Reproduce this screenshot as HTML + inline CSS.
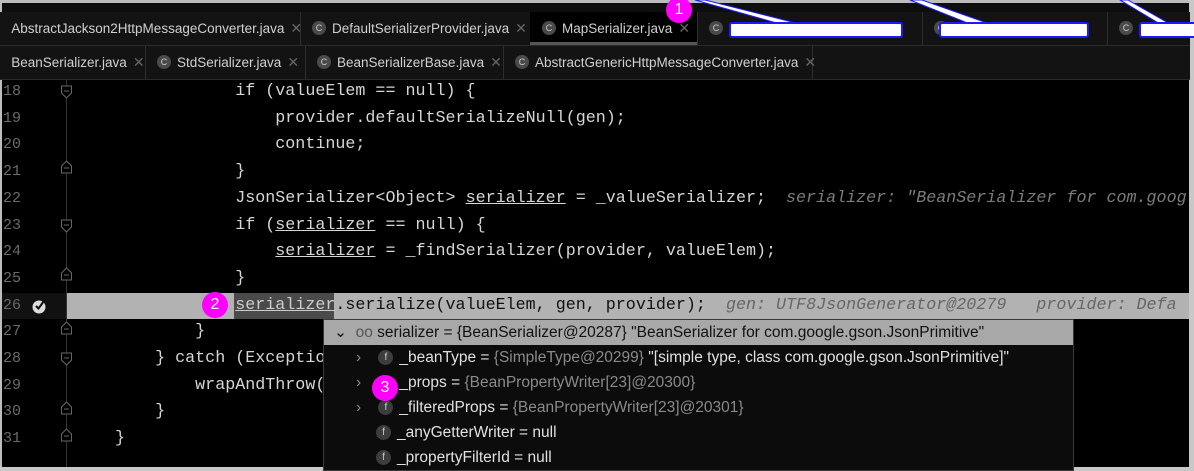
<!DOCTYPE html>
<html><head><style>
body{margin:0;width:1194px;height:471px;overflow:hidden;background:#000;position:relative;font-family:"Liberation Sans",sans-serif}
.abs{position:absolute}
.tabrow{position:absolute;left:0;width:1190px;height:33px;background:#131313;border-bottom:1px solid #2a2a2a}
.tab{position:absolute;top:0;height:33px;border-right:1px solid #2e2e2e;color:#d0d0d0;font-size:13.5px;line-height:33px;white-space:nowrap}
.ic{display:inline-block;width:14px;height:14px;border-radius:50%;background:#4a4a4a;color:#ccc;font-size:9px;line-height:14px;text-align:center;vertical-align:middle;margin:0 6px 2px 12px}
.x{color:#666;margin-left:6px;font-size:14px}
.code{position:absolute;left:75px;font-family:"Liberation Mono",monospace;font-size:16.7px;color:#d6d6d6;white-space:pre;line-height:26.7px}
.ln{position:absolute;left:3px;font-family:"Liberation Mono",monospace;font-size:15px;color:#6a6a6a;line-height:26.7px}
.u{text-decoration:underline}
.h{color:#7c7c7c;font-style:italic}
.pop{position:absolute;left:323px;top:319px;width:749px;height:150px;background:#0c0c0c;border:1px solid #3a3a3a;font-size:15.5px;color:#e0e0e0}
.pr{position:absolute;left:0;height:25px;line-height:25px;white-space:nowrap}
.f{display:inline-block;width:15px;height:15px;border-radius:50%;background:#3d3d3d;color:#ccc;font-size:10px;line-height:15px;text-align:center;margin-right:6px;vertical-align:middle}
.g{color:#8a8a8a}
.b{position:absolute;width:26px;height:26px;border-radius:50%;background:#f0f;color:#fff;font-size:16px;line-height:26px;text-align:center}
.wb{position:absolute;background:#fff;border:2px solid #1a1aff;border-radius:3px;height:12px}
</style></head><body>
<div class="abs" style="left:0;top:0;width:1194px;height:3px;background:#bdbdbd"></div>
<div class="abs" style="left:0;top:0;width:2px;height:471px;background:#bdbdbd"></div>
<div class="abs" style="left:1189px;top:0;width:5px;height:471px;background:#c8c8c8"></div>
<div class="abs" style="left:0;top:467px;width:1194px;height:4px;background:#c8c8c8"></div>
<div class="abs" style="left:2px;top:3px;width:1187px;height:9px;background:#0e0e0e"></div>

<div class="tabrow" style="top:12px">
<div class="tab" style="left:0;width:300px">&nbsp;&nbsp;&nbsp;AbstractJackson2HttpMessageConverter.java<span class="x">✕</span></div>
<div class="tab" style="left:300px;width:230px"><span class="ic">C</span>DefaultSerializerProvider.java<span class="x">✕</span></div>
<div class="tab" style="left:530px;width:167px;background:#000;box-shadow:inset 0 -3px 0 #555"><span class="ic">C</span>MapSerializer.java<span class="x">✕</span></div>
<div class="tab" style="left:697px;width:225px"><span class="ic">C</span></div>
<div class="tab" style="left:922px;width:185px"><span class="ic">C</span></div>
<div class="tab" style="left:1107px;width:90px;border:none"><span class="ic">C</span></div>
</div>
<div class="tabrow" style="top:46px">
<div class="tab" style="left:0;width:145px">&nbsp;&nbsp;&nbsp;BeanSerializer.java<span class="x">✕</span></div>
<div class="tab" style="left:145px;width:160px"><span class="ic">C</span>StdSerializer.java<span class="x">✕</span></div>
<div class="tab" style="left:305px;width:198px"><span class="ic">C</span>BeanSerializerBase.java<span class="x">✕</span></div>
<div class="tab" style="left:503px;width:309px"><span class="ic">C</span>AbstractGenericHttpMessageConverter.java<span class="x">✕</span></div>
</div>

<svg class="abs" style="left:0;top:0" width="1194" height="40">
<polygon points="695,0 705,0 800,24 780,24" fill="#fff" stroke="#1a1aff" stroke-width="1"/>
<polygon points="910,0 922,0 990,24 970,24" fill="#fff" stroke="#1a1aff" stroke-width="1"/>
<polygon points="1120,0 1128,0 1170,24 1160,24" fill="#fff" stroke="#1a1aff" stroke-width="1"/>
</svg>
<div class="wb" style="left:729px;top:22px;width:170px"></div>
<div class="wb" style="left:939px;top:22px;width:146px"></div>
<div class="wb" style="left:1139px;top:22px;width:60px"></div>

<div class="abs" style="left:66px;top:80px;width:1px;height:387px;background:#333"></div>
<svg class="abs" style="left:59px;top:80px" width="16" height="387" fill="#000" stroke="#666" stroke-width="1">
<path d="M2.5 6h10v7l-5 5l-5-5z"/><path d="M5 11h5"/>
<path d="M2.5 86l5-5l5 5v7h-10z"/><path d="M5 88h5"/>
<path d="M2.5 140h10v7l-5 5l-5-5z"/><path d="M5 145h5"/>
<path d="M2.5 193l5-5l5 5v7h-10z"/><path d="M5 195h5"/>
<path d="M2.5 247l5-5l5 5v7h-10z"/><path d="M5 249h5"/>
<path d="M2.5 273h10v7l-5 5l-5-5z"/><path d="M5 278h5"/>
<path d="M2.5 327l5-5l5 5v7h-10z"/><path d="M5 329h5"/>
<path d="M2.5 354l5-5l5 5v7h-10z"/><path d="M5 356h5"/>
</svg>
<div class="abs" style="left:67px;top:293px;width:1122px;height:26px;background:#b2b2b2"></div>
<div class="abs" style="left:234px;top:293px;width:100px;height:26px;background:#4a4a4a"></div>
<div class="abs" style="left:2px;top:293px;width:64px;height:26px;background:#111"></div>
<svg class="abs" style="left:31px;top:298px" width="16" height="16"><circle cx="8" cy="9" r="6.5" fill="#ddd"/><path d="M5 8l2.5 2.5L13 3" stroke="#111" stroke-width="2" fill="none"/></svg>

<div class="ln" style="top:79px">18<br>19<br>20<br>21<br>22<br>23<br>24<br>25<br>26<br>27<br>28<br>29<br>30<br>31</div>
<div class="code" style="top:79px">                if (valueElem == null) {
                    provider.defaultSerializeNull(gen);
                    continue;
                }
                JsonSerializer&lt;Object&gt; <span class="u">serializer</span> = _valueSerializer;  <span class="h">serializer: "BeanSerializer for com.goog</span>
                if (<span class="u">serializer</span> == null) {
                    <span class="u">serializer</span> = _findSerializer(provider, valueElem);
                }
<span style="color:#111">                <span class="u" style="color:#ccc">serializer</span>.serialize(valueElem, gen, provider);  <span style="color:#666;font-style:italic">gen: UTF8JsonGenerator@20279   provider: Defa</span></span>
            }
        } catch (Exceptio
            wrapAndThrow(
        }
    }</div>

<div class="pop">
<div class="pr" style="top:0;width:749px;background:#a8a8a8;color:#111;padding-left:10px;box-sizing:border-box">⌄&nbsp; <span style="color:#555">oo</span> serializer = {BeanSerializer@20287} "BeanSerializer for com.google.gson.JsonPrimitive"</div>
<div class="pr" style="top:25px;left:32px"><span class="g">›</span>&nbsp;&nbsp;&nbsp; <span class="f">f</span>_beanType = <span class="g">{SimpleType@20299}</span> "[simple type, class com.google.gson.JsonPrimitive]"</div>
<div class="pr" style="top:50px;left:32px"><span class="g">›</span>&nbsp;&nbsp;&nbsp; <span class="f">f</span>_props = <span class="g">{BeanPropertyWriter[23]@20300}</span></div>
<div class="pr" style="top:75px;left:32px"><span class="g">›</span>&nbsp;&nbsp;&nbsp; <span class="f">f</span>_filteredProps = <span class="g">{BeanPropertyWriter[23]@20301}</span></div>
<div class="pr" style="top:100px;left:52px"><span class="f">f</span>_anyGetterWriter = null</div>
<div class="pr" style="top:125px;left:52px"><span class="f">f</span>_propertyFilterId = null</div>
</div>

<div class="b" style="left:666px;top:-3px">1</div>
<div class="b" style="left:202px;top:292px">2</div>
<div class="b" style="left:372px;top:375px">3</div>
</body></html>
